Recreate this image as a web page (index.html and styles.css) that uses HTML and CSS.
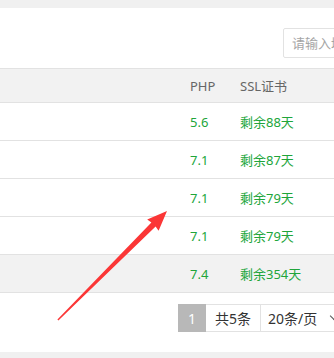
FILE: index.html
```html
<!DOCTYPE html>
<html lang="zh-CN">

<head>
    <meta charset="UTF-8">
    <meta name="viewport" content="width=device-width, initial-scale=1.0">
    <title>网站</title>
    <link rel="stylesheet" href="styles.css">
</head>

<body>
    <div id="panel">
        <div class="toolbar">
            <div class="search-box">
                <input type="text" class="search" placeholder="请输入域名或备注">
            </div>
        </div>
        <table class="sites">
            <thead>
                <tr>
                    <th class="col-name"></th>
                    <th class="col-php">PHP</th>
                    <th class="col-ssl">SSL证书</th>
                </tr>
            </thead>
            <tbody>
                <tr>
                    <td></td>
                    <td class="green">5.6</td>
                    <td class="green">剩余88天</td>
                </tr>
                <tr>
                    <td></td>
                    <td class="green">7.1</td>
                    <td class="green">剩余87天</td>
                </tr>
                <tr>
                    <td></td>
                    <td class="green">7.1</td>
                    <td class="green">剩余79天</td>
                </tr>
                <tr>
                    <td></td>
                    <td class="green">7.1</td>
                    <td class="green">剩余79天</td>
                </tr>
                <tr class="hover">
                    <td></td>
                    <td class="green">7.4</td>
                    <td class="green">剩余354天</td>
                </tr>
            </tbody>
        </table>
        <div class="pager">
            <span class="cur">1</span>
            <span class="count">共5条</span>
            <span class="limit">20条/页<i class="caret"></i></span>
        </div>
    </div>
    <!-- 标注箭头 -->
    <svg class="mark" width="334" height="358" viewBox="0 0 334 358">
        <polygon points="167,211 158.6,230.8 155.6,226.6 58.4,320.6 57.4,319.6 151.4,222.4 147.2,219.4" fill="#fb3636" />
    </svg>
</body>

</html>
```

FILE: styles.css
```css
* {
    margin: 0;
    padding: 0;
    box-sizing: border-box;
}

body {
    background-color: #f0f0f0;
    font-family: "Noto Sans", "Noto Sans CJK SC", sans-serif;
    font-size: 13px;
    color: #666;
    width: 334px;
    height: 358px;
    overflow: hidden;
    position: relative;
}

#panel {
    margin-top: 8px;
    background-color: #fff;
    height: 344px;
}

.toolbar {
    padding: 20px 0 10px 283px;
    height: 60px;
}

.search-box {
    width: 51px;
    height: 30px;
    overflow: hidden;
}

.search {
    display: block;
    width: 140px;
    height: 30px;
    border: 1px solid #e2e2e2;
    border-radius: 2px;
    padding-left: 8px;
    font-family: inherit;
    font-size: 13px;
    outline: none;
}

.search::placeholder {
    color: #a5a5a5;
}

table.sites {
    width: 100%;
    border-collapse: collapse;
    table-layout: fixed;
}

table.sites th,
table.sites td {
    text-align: left;
    font-weight: normal;
    padding: 0 0 0 10px;
    white-space: nowrap;
}

table.sites th {
    height: 34px;
    background-color: #f2f2f2;
    border-top: 1px solid #e2e2e2;
    border-bottom: 1px solid #e2e2e2;
}

table.sites td {
    height: 38px;
    border-bottom: 1px solid #e2e2e2;
}

.col-php {
    width: 50px;
}

.col-ssl {
    width: 104px;
}

tr.hover td {
    background-color: #f2f2f2;
}

.green {
    color: #20a53a;
}

.pager {
    display: flex;
    margin: 11px 0 0 178px;
    height: 28px;
    font-size: 14px;
    color: #333;
}

.pager span {
    display: flex;
    align-items: center;
    height: 28px;
    border: 1px solid #e2e2e2;
    border-left: none;
}

.pager .cur {
    width: 28px;
    justify-content: center;
    background-color: #b8b8b8;
    border: none;
    color: #fff;
}

.pager .count {
    width: 55px;
    justify-content: center;
}

.pager .limit {
    padding-left: 7px;
    width: 73px;
    border-right: none;
    white-space: nowrap;
    overflow: hidden;
}

.caret {
    display: inline-block;
    flex-shrink: 0;
    width: 6px;
    height: 6px;
    border-right: 1.5px solid #555;
    border-bottom: 1.5px solid #555;
    transform: rotate(45deg);
    margin: -4px 0 0 14px;
}

.mark {
    position: absolute;
    left: 0;
    top: 0;
}
```
